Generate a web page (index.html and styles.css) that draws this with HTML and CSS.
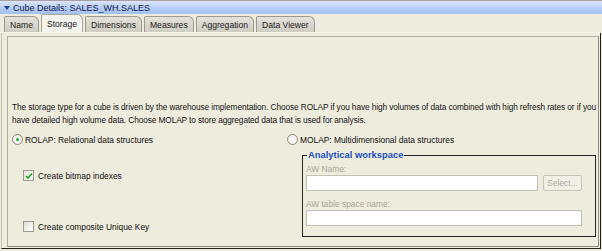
FILE: index.html
```html
<!DOCTYPE html>
<html lang="en">
<head>
    <meta charset="UTF-8">
    <title>Cube Details: SALES_WH.SALES</title>
    <link rel="stylesheet" href="styles.css">
</head>
<body>
    <div class="window">
        <div class="titlebar">
            <span class="caret"></span>
            <span class="title">Cube Details: SALES_WH.SALES</span>
        </div>

        <div class="tabs">
            <div class="tab">Name</div>
            <div class="tab active">Storage</div>
            <div class="tab">Dimensions</div>
            <div class="tab">Measures</div>
            <div class="tab">Aggregation</div>
            <div class="tab">Data Viewer</div>
        </div>

        <div class="frame">
            <div class="panel">
                <p class="desc">The storage type for a cube is driven by the warehouse implementation. Choose ROLAP if you have high volumes of data combined with high refresh rates or if you have detailed high volume data. Choose MOLAP to store aggregated data that is used for analysis.</p>

                <div class="columns">
                    <div class="col-left">
                        <div class="option">
                            <span class="radio checked"></span>
                            <span>ROLAP: Relational data structures</span>
                        </div>
                        <div class="option check-first">
                            <span class="checkbox checked">
                                <svg width="8" height="8" viewBox="0 0 8 8">
                                    <path d="M1 4 L3 6 L7 1.5" fill="none" stroke="#21a121" stroke-width="1.6"/>
                                </svg>
                            </span>
                            <span>Create bitmap indexes</span>
                        </div>
                        <div class="option check-second">
                            <span class="checkbox"></span>
                            <span>Create composite Unique Key</span>
                        </div>
                    </div>

                    <div class="col-right">
                        <div class="option">
                            <span class="radio"></span>
                            <span>MOLAP: Multidimensional data structures</span>
                        </div>
                        <fieldset class="group">
                            <legend>Analytical workspace</legend>
                            <div class="field-label">AW Name:</div>
                            <div class="field-row">
                                <div class="input wide"></div>
                                <div class="button">Select...</div>
                            </div>
                            <div class="field-label">AW table space name:</div>
                            <div class="input"></div>
                        </fieldset>
                    </div>
                </div>
            </div>
        </div>
    </div>
</body>
</html>
```

FILE: styles.css
```css
/* Reset */
* {
    margin: 0;
    padding: 0;
    box-sizing: border-box;
}

body {
    width: 602px;
    height: 251px;
    overflow: hidden;
    background-color: #eeecdc;
    font-family: 'Liberation Sans', Arial, sans-serif;
    font-size: 8.4px;
    color: #111;
}

.window {
    height: 251px;
    display: flex;
    flex-direction: column;
}

/* Title bar */
.titlebar {
    height: 14px;
    border-top: 1px solid #a3a3a3;
    background: linear-gradient(#dbe6fa, #b4cbf4 60%, #a5bff0);
    display: flex;
    align-items: center;
    padding-left: 4px;
    font-size: 9px;
    color: #10204a;
}

.caret {
    width: 0;
    height: 0;
    border-left: 3px solid transparent;
    border-right: 3px solid transparent;
    border-top: 4px solid #1c3f9a;
    margin-right: 3px;
}

/* Tabs */
.tabs {
    height: 19px;
    display: flex;
    align-items: flex-end;
    gap: 2px;
    padding-left: 4px;
    border-bottom: 1px dotted #ffffff;
}

.tab {
    height: 16px;
    padding: 0 5px;
    display: flex;
    align-items: center;
    font-size: 8.6px;
    color: #222;
    background: linear-gradient(#e4e2d9, #cfccc2);
    border: 1px solid #9c9a90;
    border-bottom: none;
    border-radius: 2px 6px 0 0;
}

.tab.active {
    height: 18px;
    background: #f5f4ee;
    border-color: #a9a79c;
}

/* Content frame */
.frame {
    flex: 1;
    margin-left: 1px;
    margin-right: 1px;
    margin-bottom: 2px;
    padding: 3px 1px 1px 5px;
    border-left: 1px solid #c6c3b4;
    border-right: 1px solid #1e1e1e;
    border-bottom: 1px solid #1e1e1e;
}

.panel {
    height: 100%;
    padding: 0 2px 0 4px;
    border: 1px solid #b1ae9f;
    border-right-color: #8f8d82;
    border-bottom-color: #8f8d82;
}

.desc {
    margin-top: 64px;
    line-height: 13px;
    width: 586px;
    font-size: 8.3px;
    letter-spacing: -0.1px;
    color: #141414;
}

.columns {
    display: flex;
    margin-top: 6px;
}

.col-left {
    width: 275px;
}

.col-right {
    flex: 1;
}

.option {
    display: flex;
    align-items: center;
    gap: 2px;
    height: 13px;
}

.check-first {
    margin-left: 11px;
    margin-top: 23px;
}

.check-second {
    margin-left: 11px;
    margin-top: 38px;
}

.radio {
    width: 11px;
    height: 11px;
    border-radius: 50%;
    border: 1px solid #8d8b80;
    background: radial-gradient(#ffffff, #e8e6dc);
    display: flex;
    align-items: center;
    justify-content: center;
}

.radio.checked::after {
    content: '';
    width: 3px;
    height: 3px;
    border-radius: 50%;
    background: #2aa52a;
}

.checkbox {
    width: 11px;
    height: 11px;
    margin-right: 2px;
    border: 1px solid #9c9a8f;
    background: linear-gradient(135deg, #e2e0d6, #ffffff);
    display: flex;
    align-items: center;
    justify-content: center;
}

/* Analytical workspace group */
.group {
    margin: 4px 0 0 15px;
    height: 87px;
    border: 1px solid #262626;
    padding: 0 13px 0 3px;
    min-width: 0;
}

.group legend {
    font-size: 9.4px;
    font-weight: bold;
    color: #2050c4;
    padding: 0 1px;
    margin-left: 1px;
    line-height: 10px;
}

.field-label {
    height: 12px;
    line-height: 12px;
    color: #a8a69b;
    margin-top: 3px;
}

.field-row {
    display: flex;
    gap: 5px;
}

.input {
    height: 16px;
    background: #ffffff;
    border: 1px solid #c3c1b5;
}

.input.wide {
    flex: 1;
}

.button {
    width: 39px;
    height: 16px;
    border: 1px solid #c7c5ba;
    border-radius: 2px;
    color: #aeaca1;
    display: flex;
    align-items: center;
    justify-content: center;
    background: #f1f0e6;
}

.field-row + .field-label {
    margin-top: 7px;
}
```
